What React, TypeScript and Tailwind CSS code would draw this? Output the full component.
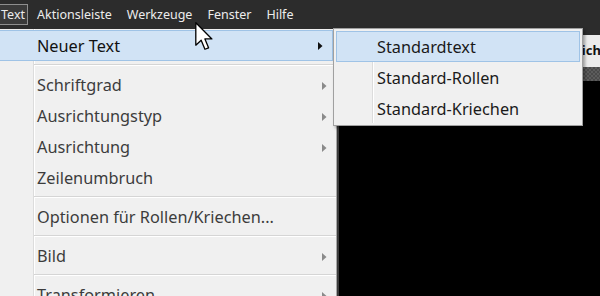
import React from "react";

const font = { fontFamily: '"Noto Sans", "Open Sans", sans-serif' };

const Arrow = ({ dark }: { dark?: boolean }) => (
  <svg width="5" height="8" viewBox="0 0 5 8" className="shrink-0">
    <path d="M0 0 L4.5 4 L0 8 Z" fill={dark ? "#111" : "#8a8a8a"} />
  </svg>
);

const Separator = () => (
  <div className="h-[8px] flex flex-col justify-center pl-[34px]">
    <div className="h-px bg-[#d5d5d5]" />
    <div className="h-px bg-white" />
  </div>
);

const Item = ({ label, sub }: { label: string; sub?: boolean }) => (
  <div className="h-[31px] flex items-center pl-[37px] pr-[9px] pt-[2px] text-[16.3px] text-[#3c3c3c]">
    <span className="flex-1 whitespace-nowrap">{label}</span>
    {sub && <Arrow />}
  </div>
);

const SubItem = ({ label, active }: { label: string; active?: boolean }) => (
  <div
    className={
      "h-[31px] flex items-center pl-[40px] pt-px text-[16.3px] text-[#1a1a1a] border " +
      (active ? "bg-[#d1e3f5] border-[#9fc3e6]" : "border-transparent")
    }
  >
    {label}
  </div>
);

export default function App() {
  return (
    <div className="w-[600px] h-[296px] overflow-hidden relative bg-black" style={font}>
      {/* menu bar */}
      <div className="h-[29px] bg-[#2c2c2c] flex items-center text-[12.5px] text-[#ececec]">
        <div className="h-[21px] -ml-[4px] pl-[4px] pr-[2px] pt-px flex items-center border border-[#8e8e8e] bg-[#3a3a3a]">
          Text
        </div>
        <div className="flex gap-[15px] ml-[9px] pt-[2px]">
          <span>Aktionsleiste</span>
          <span>Werkzeuge</span>
          <span>Fenster</span>
          <span>Hilfe</span>
        </div>
      </div>

      <div className="flex h-[267px]">
        {/* main menu */}
        <div className="w-[337px] shrink-0 bg-[#f0f0f0] border-r border-[#a7a7a7] relative pt-px">
          <div className="absolute left-[33px] top-0 bottom-0 w-px bg-[#dcdcdc]" />
          <div className="absolute left-[34px] top-0 bottom-0 w-px bg-white" />
          <div className="relative">
            <div className="h-[31px] flex items-center pl-[37px] pr-[9px] pt-px text-[16.3px] text-[#111] bg-[#d1e3f5] border-y border-r border-[#9fc3e6] mr-[3px]">
              <span className="flex-1">Neuer Text</span>
              <Arrow dark />
            </div>
            <Separator />
            <Item label="Schriftgrad" sub />
            <Item label="Ausrichtungstyp" sub />
            <Item label="Ausrichtung" sub />
            <Item label="Zeilenumbruch" />
            <Separator />
            <Item label="Optionen für Rollen/Kriechen..." />
            <Separator />
            <Item label="Bild" sub />
            <Separator />
            <Item label="Transformieren" sub />
          </div>
        </div>

        {/* document area */}
        <div className="flex-1 flex flex-col min-w-0 border-l-2 border-[#3a3a3a]">
          <div className="h-[6px] bg-[#2c2c2c]" />
          <div className="h-[32px] bg-[#ececec] flex items-center pl-[230px] text-[13px] font-bold text-[#111] whitespace-nowrap overflow-hidden">
            Stich
          </div>
          <div className="h-[14px] bg-[repeating-conic-gradient(#4a4a4a_0_25%,#5c5c5c_0_50%)] bg-[length:4px_4px]" />
          <div className="flex-1 bg-black" />
        </div>
      </div>

      {/* submenu */}
      <div className="absolute left-[333px] top-[28px] w-[250px] h-[98px] bg-[#f0f0f0] border border-[#a0a0a0] p-[2px] shadow-[2px_2px_3px_rgba(0,0,0,0.35)]">
        <div className="absolute left-[38px] top-[2px] bottom-[2px] w-px bg-[#dcdcdc]" />
        <div className="absolute left-[39px] top-[2px] bottom-[2px] w-px bg-white" />
        <div className="relative">
          <SubItem label="Standardtext" active />
          <SubItem label="Standard-Rollen" />
          <SubItem label="Standard-Kriechen" />
        </div>
      </div>

      {/* mouse pointer */}
      <svg
        className="absolute left-[195px] top-[22px]"
        width="19"
        height="29"
        viewBox="0 0 13 20"
      >
        <path
          d="M0.5 0.5 L0.5 16 L4.2 12.6 L6.8 18.8 L9.3 17.8 L6.8 11.7 L11.6 11.7 Z"
          fill="#fff"
          stroke="#000"
          strokeWidth="0.9"
          strokeLinejoin="round"
        />
      </svg>
    </div>
  );
}
